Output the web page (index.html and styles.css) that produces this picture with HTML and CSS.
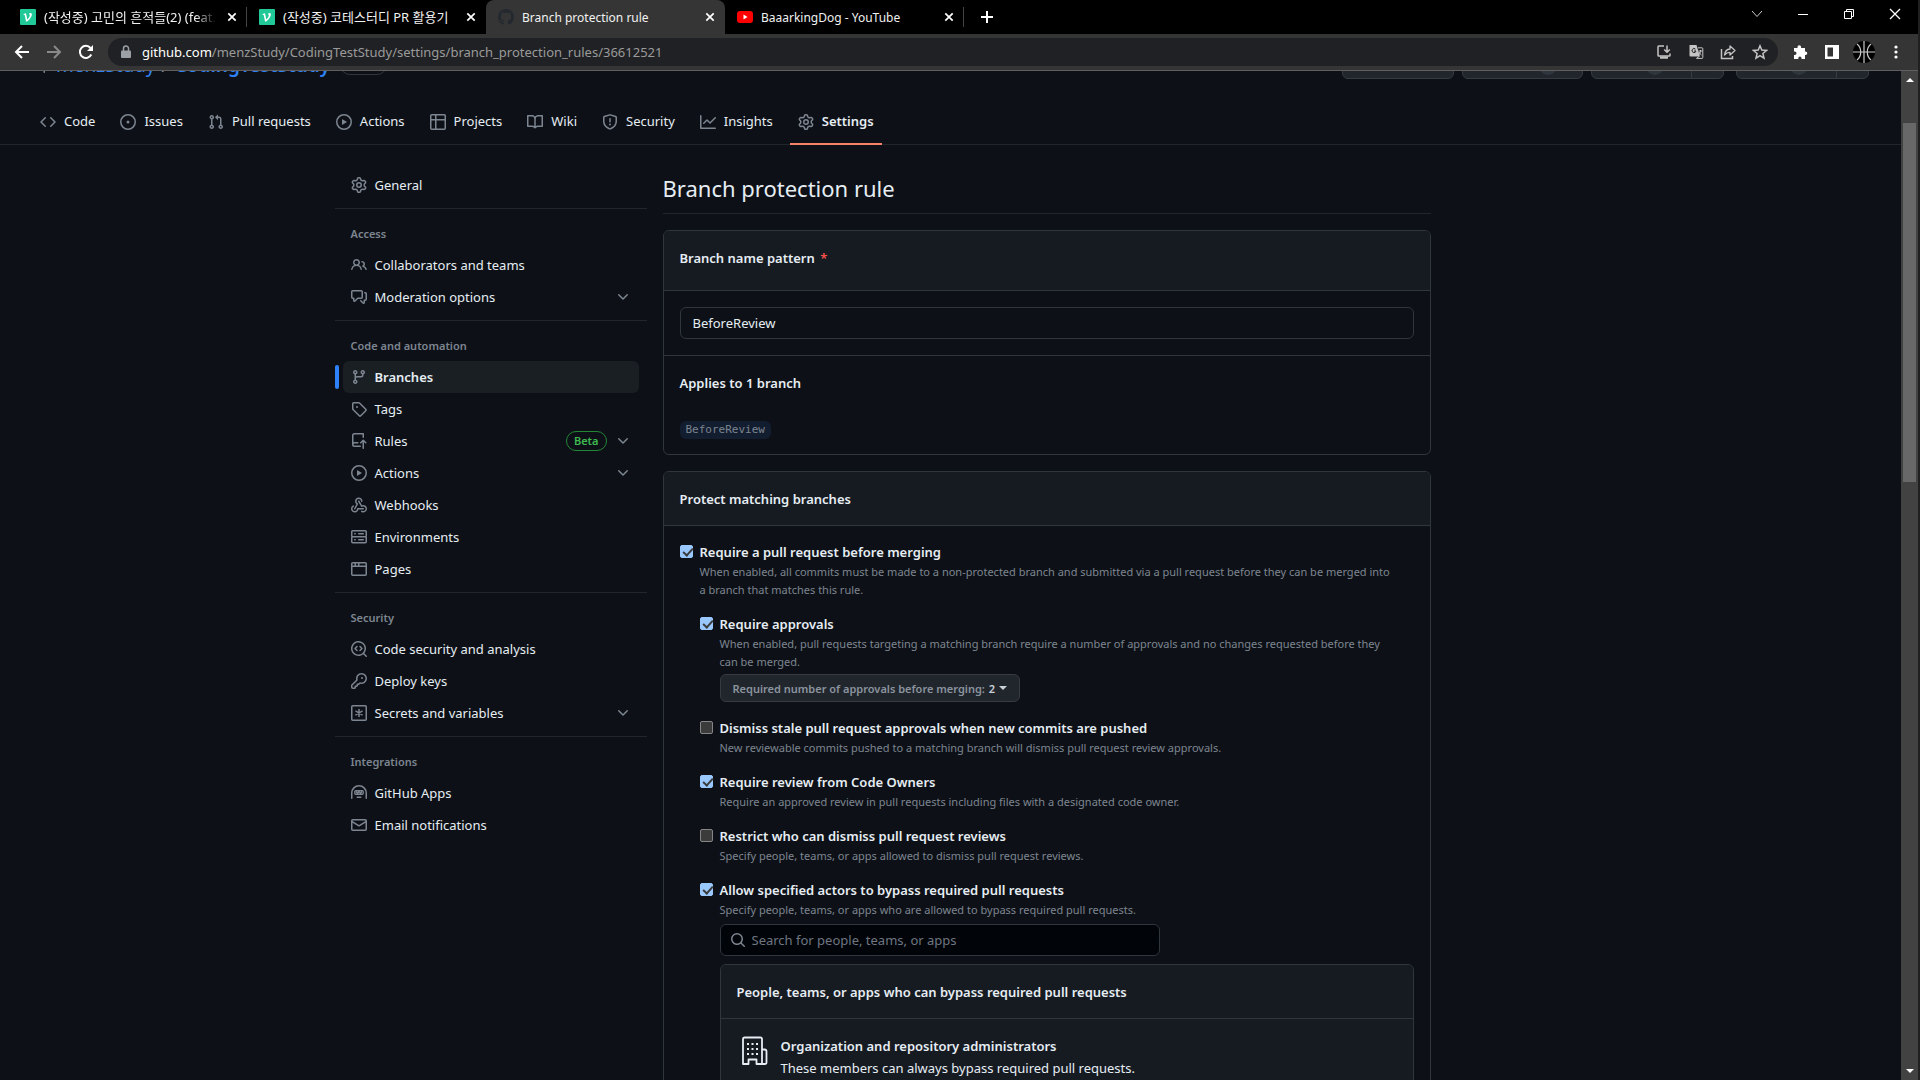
FILE: index.html
```html
<!DOCTYPE html>
<html lang="en">
<head>
<meta charset="utf-8">
<title>Branch protection rule</title>
<link rel="stylesheet" href="styles.css">
</head>
<body>
<svg class="sprite" aria-hidden="true">
  <symbol id="code" viewBox="0 0 16 16"><path d="M4.72 3.22a.75.75 0 0 1 1.06 1.06L2.06 8l3.72 3.72a.75.75 0 1 1-1.06 1.06L.47 8.53a.75.75 0 0 1 0-1.06l4.25-4.25Zm6.56 0a.75.75 0 1 0-1.06 1.06L13.94 8l-3.72 3.72a.75.75 0 1 0 1.06 1.06l4.25-4.25a.75.75 0 0 0 0-1.06l-4.25-4.25Z"/></symbol>
  <symbol id="issue" viewBox="0 0 16 16"><path d="M8 9.5a1.5 1.5 0 1 0 0-3 1.5 1.5 0 0 0 0 3Z"/><path d="M8 0a8 8 0 1 1 0 16A8 8 0 0 1 8 0ZM1.5 8a6.5 6.5 0 1 0 13 0 6.5 6.5 0 0 0-13 0Z"/></symbol>
  <symbol id="pull" viewBox="0 0 16 16"><path d="M1.5 3.25a2.25 2.25 0 1 1 3 2.122v5.256a2.251 2.251 0 1 1-1.5 0V5.372A2.25 2.25 0 0 1 1.5 3.25Zm5.677-.177L9.573.677A.25.25 0 0 1 10 .854V2.5h1A2.5 2.5 0 0 1 13.5 5v5.628a2.251 2.251 0 1 1-1.5 0V5a1 1 0 0 0-1-1h-1v1.646a.25.25 0 0 1-.427.177L7.177 3.427a.25.25 0 0 1 0-.354ZM3.75 2.5a.75.75 0 1 0 0 1.5.75.75 0 0 0 0-1.5Zm0 9.5a.75.75 0 1 0 0 1.5.75.75 0 0 0 0-1.5Zm8.25.75a.75.75 0 1 0 1.5 0 .75.75 0 0 0-1.5 0Z"/></symbol>
  <symbol id="play" viewBox="0 0 16 16"><path d="M8 0a8 8 0 1 1 0 16A8 8 0 0 1 8 0ZM1.5 8a6.5 6.5 0 1 0 13 0 6.5 6.5 0 0 0-13 0Zm4.879-2.773 4.264 2.559a.25.25 0 0 1 0 .428l-4.264 2.559A.25.25 0 0 1 6 10.559V5.442a.25.25 0 0 1 .379-.215Z"/></symbol>
  <symbol id="table" viewBox="0 0 16 16"><path d="M0 1.75C0 .784.784 0 1.75 0h12.5C15.216 0 16 .784 16 1.75v12.5A1.75 1.75 0 0 1 14.25 16H1.75A1.75 1.75 0 0 1 0 14.25ZM6.5 6.5v8h7.75a.25.25 0 0 0 .25-.25V6.5Zm8-1.5V1.75a.25.25 0 0 0-.25-.25H6.5V5Zm-13 1.5v7.75c0 .138.112.25.25.25H5v-8ZM5 5V1.5H1.75a.25.25 0 0 0-.25.25V5Z"/></symbol>
  <symbol id="book" viewBox="0 0 16 16"><path d="M0 1.75A.75.75 0 0 1 .75 1h4.253c1.227 0 2.317.59 3 1.501A3.743 3.743 0 0 1 11.006 1h4.245a.75.75 0 0 1 .75.75v10.5a.75.75 0 0 1-.75.75h-4.507a2.25 2.25 0 0 0-1.591.659l-.622.621a.75.75 0 0 1-1.06 0l-.622-.621A2.25 2.25 0 0 0 5.258 13H.75a.75.75 0 0 1-.75-.75Zm7.251 10.324.004-5.073-.002-2.253A2.25 2.25 0 0 0 5.003 2.5H1.5v9h3.757a3.75 3.75 0 0 1 1.994.574ZM8.755 4.75l-.004 7.322a3.752 3.752 0 0 1 1.992-.572H14.5v-9h-3.495a2.25 2.25 0 0 0-2.25 2.25Z"/></symbol>
  <symbol id="shield" viewBox="0 0 16 16"><path d="M7.467.133a1.748 1.748 0 0 1 1.066 0l5.25 1.68A1.75 1.75 0 0 1 15 3.48V7c0 1.566-.32 3.182-1.303 4.682-.983 1.498-2.585 2.813-5.032 3.855a1.697 1.697 0 0 1-1.33 0c-2.447-1.042-4.049-2.357-5.032-3.855C1.32 10.182 1 8.566 1 7V3.48a1.75 1.75 0 0 1 1.217-1.667Zm.61 1.429a.25.25 0 0 0-.153 0l-5.25 1.68a.25.25 0 0 0-.174.238V7c0 1.358.275 2.666 1.057 3.86.784 1.194 2.121 2.34 4.366 3.297a.196.196 0 0 0 .154 0c2.245-.956 3.582-2.104 4.366-3.298C13.225 9.666 13.5 8.36 13.5 7V3.48a.251.251 0 0 0-.174-.237l-5.25-1.68ZM8.75 4.75v3a.75.75 0 0 1-1.5 0v-3a.75.75 0 0 1 1.5 0ZM9 10.5a1 1 0 1 1-2 0 1 1 0 0 1 2 0Z"/></symbol>
  <symbol id="graph" viewBox="0 0 16 16"><path d="M1.5 1.75V13.5h13.75a.75.75 0 0 1 0 1.5H.75a.75.75 0 0 1-.75-.75V1.75a.75.75 0 0 1 1.5 0Zm14.28 2.53-5.25 5.25a.75.75 0 0 1-1.06 0L7 7.06 4.28 9.78a.75.75 0 0 1-1.06-1.06l3.25-3.25a.75.75 0 0 1 1.06 0L10 7.94l4.72-4.72a.75.75 0 1 1 1.06 1.06Z"/></symbol>
  <symbol id="gear" viewBox="0 0 16 16"><path d="M8 0a8.2 8.2 0 0 1 .701.031C9.444.095 9.99.645 10.16 1.29l.288 1.107c.018.066.079.158.212.224.231.114.454.243.668.386.123.082.233.09.299.071l1.103-.303c.644-.176 1.392.021 1.82.63.27.385.506.792.704 1.218.315.675.111 1.422-.364 1.891l-.814.806c-.049.048-.098.147-.088.294.016.257.016.515 0 .772-.01.147.038.246.088.294l.814.806c.475.469.679 1.216.364 1.891a7.977 7.977 0 0 1-.704 1.217c-.428.61-1.176.807-1.82.63l-1.102-.302c-.067-.019-.177-.011-.3.071a5.909 5.909 0 0 1-.668.386c-.133.066-.194.158-.211.224l-.29 1.106c-.168.646-.715 1.196-1.458 1.26a8.006 8.006 0 0 1-1.402 0c-.743-.064-1.289-.614-1.458-1.26l-.289-1.106c-.018-.066-.079-.158-.212-.224a5.738 5.738 0 0 1-.668-.386c-.123-.082-.233-.09-.299-.071l-1.103.303c-.644.176-1.392-.021-1.82-.63a8.12 8.12 0 0 1-.704-1.218c-.315-.675-.111-1.422.363-1.891l.815-.806c.05-.048.098-.147.088-.294a6.214 6.214 0 0 1 0-.772c.01-.147-.038-.246-.088-.294l-.815-.806C.635 6.045.431 5.298.746 4.623a7.92 7.92 0 0 1 .704-1.217c.428-.61 1.176-.807 1.82-.63l1.102.302c.067.019.177.011.3-.071.214-.143.437-.272.668-.386.133-.066.194-.158.211-.224l.29-1.106C6.009.645 6.556.095 7.299.03 7.53.01 7.764 0 8 0Zm-.571 1.525c-.036.003-.108.036-.137.146l-.289 1.105c-.147.561-.549.967-.998 1.189-.173.086-.34.183-.5.29-.417.278-.97.423-1.529.27l-1.103-.303c-.109-.03-.175.016-.195.045-.22.312-.412.644-.573.99-.014.031-.021.11.059.19l.815.806c.411.406.562.957.53 1.456a4.709 4.709 0 0 0 0 .582c.032.499-.119 1.05-.53 1.456l-.815.806c-.081.08-.073.159-.059.19.162.346.353.677.573.989.02.03.085.076.195.046l1.102-.303c.56-.153 1.113-.008 1.53.27.161.107.328.204.501.29.447.222.85.629.997 1.189l.289 1.105c.029.109.101.143.137.146a6.6 6.6 0 0 0 1.142 0c.036-.003.108-.036.137-.146l.289-1.105c.147-.561.549-.967.998-1.189.173-.086.34-.183.5-.29.417-.278.97-.423 1.529-.27l1.103.303c.109.029.175-.016.195-.045.22-.313.411-.644.573-.99.014-.031.021-.11-.059-.19l-.815-.806c-.411-.406-.562-.957-.53-1.456a4.709 4.709 0 0 0 0-.582c-.032-.499.119-1.05.53-1.456l.815-.806c.081-.08.073-.159.059-.19a6.464 6.464 0 0 0-.573-.989c-.02-.03-.085-.076-.195-.046l-1.102.303c-.56.153-1.113.008-1.53-.27a4.44 4.44 0 0 0-.501-.29c-.447-.222-.85-.629-.997-1.189l-.289-1.105c-.029-.11-.101-.143-.137-.146a6.6 6.6 0 0 0-1.142 0ZM11 8a3 3 0 1 1-6 0 3 3 0 0 1 6 0ZM9.5 8a1.5 1.5 0 1 0-3.001.001A1.5 1.5 0 0 0 9.5 8Z"/></symbol>
  <symbol id="people" viewBox="0 0 16 16"><path d="M2 5.5a3.5 3.5 0 1 1 5.898 2.549 5.508 5.508 0 0 1 3.034 4.084.75.75 0 1 1-1.482.235 4 4 0 0 0-7.9 0 .75.75 0 0 1-1.482-.236A5.507 5.507 0 0 1 3.102 8.05 3.493 3.493 0 0 1 2 5.5ZM11 4a3.001 3.001 0 0 1 2.22 5.018 5.01 5.01 0 0 1 2.56 3.012.749.749 0 0 1-.885.954.752.752 0 0 1-.549-.514 3.507 3.507 0 0 0-2.522-2.372.75.75 0 0 1-.574-.73v-.352a.75.75 0 0 1 .416-.672A1.5 1.5 0 0 0 11 5.5.75.75 0 0 1 11 4Zm-5.5-.5a2 2 0 1 0-.001 3.999A2 2 0 0 0 5.5 3.5Z"/></symbol>
  <symbol id="discussion" viewBox="0 0 16 16"><path d="M1.75 1h8.5c.966 0 1.75.784 1.75 1.75v5.5A1.75 1.75 0 0 1 10.25 10H7.061l-2.574 2.573A1.458 1.458 0 0 1 2 11.543V10h-.25A1.75 1.75 0 0 1 0 8.25v-5.5C0 1.784.784 1 1.75 1ZM1.5 2.75v5.5c0 .138.112.25.25.25h1a.75.75 0 0 1 .75.75v2.19l2.72-2.72a.749.749 0 0 1 .53-.22h3.5a.25.25 0 0 0 .25-.25v-5.5a.25.25 0 0 0-.25-.25h-8.5a.25.25 0 0 0-.25.25Zm13 2a.25.25 0 0 0-.25-.25h-.5a.75.75 0 0 1 0-1.5h.5c.966 0 1.75.784 1.75 1.75v5.5A1.75 1.75 0 0 1 14.25 12H14v1.543a1.458 1.458 0 0 1-2.487 1.03L9.22 12.28a.749.749 0 0 1 .326-1.275.749.749 0 0 1 .734.215l2.22 2.22v-2.19a.75.75 0 0 1 .75-.75h1a.25.25 0 0 0 .25-.25Z"/></symbol>
  <symbol id="branch" viewBox="0 0 16 16"><path d="M9.5 3.25a2.25 2.25 0 1 1 3 2.122V6A2.5 2.5 0 0 1 10 8.5H6a1 1 0 0 0-1 1v1.128a2.251 2.251 0 1 1-1.5 0V5.372a2.25 2.25 0 1 1 1.5 0v1.836A2.493 2.493 0 0 1 6 7h4a1 1 0 0 0 1-1v-.628A2.25 2.25 0 0 1 9.5 3.25Zm-6 0a.75.75 0 1 0 1.5 0 .75.75 0 0 0-1.5 0Zm8.25-.75a.75.75 0 1 0 0 1.5.75.75 0 0 0 0-1.5ZM4.25 12a.75.75 0 1 0 0 1.5.75.75 0 0 0 0-1.5Z"/></symbol>
  <symbol id="tag" viewBox="0 0 16 16"><path d="M1 7.775V2.75C1 1.784 1.784 1 2.75 1h5.025c.464 0 .91.184 1.238.513l6.25 6.25a1.75 1.75 0 0 1 0 2.474l-5.026 5.026a1.75 1.75 0 0 1-2.474 0l-6.25-6.25A1.752 1.752 0 0 1 1 7.775Zm1.5 0c0 .066.026.13.073.177l6.25 6.25a.25.25 0 0 0 .354 0l5.025-5.025a.25.25 0 0 0 0-.354l-6.25-6.25a.25.25 0 0 0-.177-.073H2.75a.25.25 0 0 0-.25.25ZM6 5a1 1 0 1 1 0 2 1 1 0 0 1 0-2Z"/></symbol>
  <symbol id="push" viewBox="0 0 16 16"><path d="M1 2.5A2.5 2.5 0 0 1 3.5 0h8.75a.75.75 0 0 1 .75.75v3.5a.75.75 0 0 1-1.5 0V1.5h-8a1 1 0 0 0-1 1v6.708A2.493 2.493 0 0 1 3.5 9h3.25a.75.75 0 0 1 0 1.5H3.5a1 1 0 0 0 0 2h5.75a.75.75 0 0 1 0 1.5H3.5A2.5 2.5 0 0 1 1 11.5ZM14.22 10.27l-1.23-1.22v6.225a.75.75 0 0 1-1.5 0V9.05l-1.22 1.22a.75.75 0 1 1-1.06-1.06l2.505-2.504a.75.75 0 0 1 1.06 0L15.28 9.21a.75.75 0 0 1-1.06 1.06Z"/></symbol>
  <symbol id="webhook" viewBox="0 0 16 16"><path d="M5.5 4.25a2.25 2.25 0 0 1 4.5 0 .75.75 0 0 0 1.5 0 3.75 3.75 0 1 0-6.14 2.889l-2.272 4.258a.75.75 0 0 0 1.324.706L7 7.25a.75.75 0 0 0-.309-1.015A2.25 2.25 0 0 1 5.5 4.25Z"/><path d="M7.364 3.607a.75.75 0 0 1 1.03.257l2.608 4.349a3.75 3.75 0 1 1-.628 6.785.75.75 0 0 1 .752-1.299 2.25 2.25 0 1 0-.033-3.88.75.75 0 0 1-1.03-.256L7.107 4.636a.75.75 0 0 1 .257-1.03Z"/><path d="M2.9 8.776A.75.75 0 0 1 2.625 9.8 2.25 2.25 0 1 0 6 11.75a.75.75 0 0 1 .75-.751h5.5a.75.75 0 0 1 0 1.5H7.425a3.751 3.751 0 1 1-5.55-3.998.75.75 0 0 1 1.024.274Z"/></symbol>
  <symbol id="server" viewBox="0 0 16 16"><path d="M1.75 1h12.5c.966 0 1.75.784 1.75 1.75v4c0 .372-.116.717-.314 1 .198.283.314.628.314 1v4a1.75 1.75 0 0 1-1.75 1.75H1.75A1.75 1.75 0 0 1 0 12.75v-4c0-.358.109-.707.314-1a1.739 1.739 0 0 1-.314-1v-4C0 1.784.784 1 1.75 1ZM1.5 2.75v4c0 .138.112.25.25.25h12.5a.25.25 0 0 0 .25-.25v-4a.25.25 0 0 0-.25-.25H1.75a.25.25 0 0 0-.25.25Zm.25 5.75a.25.25 0 0 0-.25.25v4c0 .138.112.25.25.25h12.5a.25.25 0 0 0 .25-.25v-4a.25.25 0 0 0-.25-.25ZM7 4.75A.75.75 0 0 1 7.75 4h4.5a.75.75 0 0 1 0 1.5h-4.5A.75.75 0 0 1 7 4.75ZM7.75 10h4.5a.75.75 0 0 1 0 1.5h-4.5a.75.75 0 0 1 0-1.5ZM3 4.75A.75.75 0 0 1 3.75 4h.5a.75.75 0 0 1 0 1.5h-.5A.75.75 0 0 1 3 4.75ZM3.75 10h.5a.75.75 0 0 1 0 1.5h-.5a.75.75 0 0 1 0-1.5Z"/></symbol>
  <symbol id="browser" viewBox="0 0 16 16"><path d="M0 2.75C0 1.784.784 1 1.75 1h12.5c.966 0 1.75.784 1.75 1.75v10.5A1.75 1.75 0 0 1 14.25 15H1.75A1.75 1.75 0 0 1 0 13.25ZM14.5 6h-13v7.25c0 .138.112.25.25.25h12.5a.25.25 0 0 0 .25-.25Zm-6-3.5v2h6V2.75a.25.25 0 0 0-.25-.25ZM5 2.5v2h2v-2Zm-3.25 0a.25.25 0 0 0-.25.25V4.5h2v-2Z"/></symbol>
  <symbol id="codescan" viewBox="0 0 16 16"><path d="M8.47 4.97a.75.75 0 0 0 0 1.06L9.94 7.5 8.47 8.97a.75.75 0 1 0 1.06 1.06l2-2a.75.75 0 0 0 0-1.06l-2-2a.75.75 0 0 0-1.06 0ZM6.53 6.03a.75.75 0 0 0-1.06-1.06l-2 2a.75.75 0 0 0 0 1.06l2 2a.75.75 0 1 0 1.06-1.06L5.06 7.5l1.47-1.47Z"/><path d="M12.246 13.307a7.501 7.501 0 1 1 1.06-1.06l2.474 2.473a.75.75 0 1 1-1.06 1.06l-2.474-2.473ZM1.5 7.5a6.002 6.002 0 0 0 3.608 5.504 6.002 6.002 0 0 0 6.486-1.117.748.748 0 0 1 .292-.293A6 6 0 1 0 1.5 7.5Z"/></symbol>
  <symbol id="key" viewBox="0 0 16 16"><path d="M10.5 0a5.499 5.499 0 1 1-1.288 10.848l-.932.932a.749.749 0 0 1-.53.22H7v.75a.749.749 0 0 1-.22.53l-.5.5a.749.749 0 0 1-.53.22H5v.75a.749.749 0 0 1-.22.53l-.5.5a.749.749 0 0 1-.53.22h-2A1.75 1.75 0 0 1 0 14.25v-2c0-.199.079-.389.22-.53l4.932-4.932A5.5 5.5 0 0 1 10.5 0Zm-4 5.5c-.001.431.069.86.205 1.269a.75.75 0 0 1-.181.768L1.5 12.56v1.69c0 .138.112.25.25.25h1.69l.06-.06v-1.19a.75.75 0 0 1 .75-.75h1.19l.06-.06v-1.19a.75.75 0 0 1 .75-.75h1.19l1.023-1.025a.75.75 0 0 1 .768-.18A4 4 0 1 0 6.5 5.5ZM11 6a1 1 0 1 1 0-2 1 1 0 0 1 0 2Z"/></symbol>
  <symbol id="asterisk" viewBox="0 0 16 16"><rect x=".75" y=".75" width="14.5" height="14.5" rx="1" fill="none" stroke="currentColor" stroke-width="1.5"/><path d="M8 4.4v7.2M4.9 6.2l6.2 3.6M11.1 6.2l-6.2 3.6" fill="none" stroke="currentColor" stroke-width="1.5" stroke-linecap="round"/></symbol>
  <symbol id="hubot" viewBox="0 0 16 16"><path d="M0 8a8 8 0 1 1 16 0v5.25a.75.75 0 0 1-1.5 0V8a6.5 6.5 0 1 0-13 0v5.25a.75.75 0 0 1-1.5 0V8Zm5.5 4.25a.75.75 0 0 1 .75-.75h3.5a.75.75 0 0 1 0 1.5h-3.5a.75.75 0 0 1-.75-.75Z"/><path d="M4.75 5.75h6.5a1 1 0 0 1 1 1v1.5a1 1 0 0 1-1 1h-6.5a1 1 0 0 1-1-1v-1.5a1 1 0 0 1 1-1ZM5 6.800l1.500 1.300L8 6.800l1.500 1.300L11 6.800" fill="none" stroke="currentColor" stroke-width="1.3"/></symbol>
  <symbol id="mail" viewBox="0 0 16 16"><path d="M1.75 2h12.5c.966 0 1.75.784 1.75 1.75v8.5A1.75 1.75 0 0 1 14.25 14H1.75A1.75 1.75 0 0 1 0 12.25v-8.5C0 2.784.784 2 1.75 2ZM1.5 12.251c0 .138.112.25.25.25h12.5a.25.25 0 0 0 .25-.25V5.809L8.38 9.397a.75.75 0 0 1-.76 0L1.5 5.809v6.442Zm13-8.181v-.32a.25.25 0 0 0-.25-.25H1.75a.25.25 0 0 0-.25.25v.32L8 7.88Z"/></symbol>
  <symbol id="chevron" viewBox="0 0 16 16"><path d="M12.78 5.22a.749.749 0 0 1 0 1.06l-4.25 4.25a.749.749 0 0 1-1.06 0L3.22 6.28a.749.749 0 1 1 1.06-1.06L8 8.939l3.72-3.719a.749.749 0 0 1 1.06 0Z"/></symbol>
  <symbol id="github" viewBox="0 0 16 16"><path d="M8 0c4.42 0 8 3.58 8 8a8.013 8.013 0 0 1-5.45 7.59c-.4.08-.55-.17-.55-.38 0-.27.01-1.13.01-2.2 0-.75-.25-1.23-.54-1.48 1.78-.2 3.65-.88 3.65-3.95 0-.88-.31-1.59-.82-2.15.08-.2.36-1.02-.08-2.12 0 0-.67-.22-2.2.82-.64-.18-1.32-.27-2-.27-.68 0-1.36.09-2 .27-1.53-1.03-2.2-.82-2.2-.82-.44 1.1-.16 1.92-.08 2.12-.51.56-.82 1.28-.82 2.15 0 3.06 1.86 3.75 3.64 3.95-.23.2-.44.55-.51 1.07-.46.21-1.61.55-2.33-.66-.15-.24-.6-.83-1.23-.82-.67.01-.27.38.01.53.34.19.73.9.82 1.13.16.45.68 1.31 2.69.94 0 .67.01 1.3.01 1.49 0 .21-.15.45-.55.38A7.995 7.995 0 0 1 0 8c0-4.42 3.58-8 8-8Z"/></symbol>
  <symbol id="search" viewBox="0 0 16 16"><path d="M10.68 11.74a6 6 0 0 1-7.922-8.982 6 6 0 0 1 8.982 7.922l3.04 3.04a.749.749 0 0 1-.326 1.275.749.749 0 0 1-.734-.215ZM11.5 7a4.499 4.499 0 1 0-8.997 0A4.499 4.499 0 0 0 11.5 7Z"/></symbol>
  <symbol id="org" viewBox="0 0 32 32"><path d="M6 29V4a1.500 1.500 0 0 1 1.500-1.500h16A1.500 1.500 0 0 1 25 4v25h-5.500v-4.500h-8V29zM25 14.500h2.500a2 2 0 0 1 2 2V27.500a1.500 1.500 0 0 1-1.500 1.500h-3" fill="none" stroke="currentColor" stroke-width="1.800" stroke-linejoin="round"/><path d="M10 8h2v2h-2zm4.500 0h2v2h-2zm4.500 0h2v2h-2zm-9 5h2v2h-2zm4.500 0h2v2h-2zm4.500 0h2v2h-2zm-9 5h2v2h-2zm4.500 0h2v2h-2zm4.500 0h2v2h-2z"/></symbol>
  <symbol id="velog" viewBox="0 0 16 16"><rect width="16" height="16" rx="1" fill="#20c997"/><path d="M3.600 4.900 6 4.300l1.300 6.200c1.700-1.700 2.500-3.200 2.500-4.300 0-.6-.4-.9-.9-1.300.4-.5 1-.8 1.600-.8.8 0 1.400.6 1.400 1.500 0 2-1.700 4.500-4.800 7H6L4.700 5.900l-1.200-.2z" fill="#fff"/></symbol>
  <symbol id="close" viewBox="0 0 16 16"><path d="m4.300 4.300 7.400 7.400m0-7.400-7.400 7.400" fill="none" stroke="currentColor" stroke-width="1.700"/></symbol>
</svg>

<div class="window">
  <header class="browser">
    <div class="tabstrip">
      <div class="tab tab-first"><svg class="icon"><use href="#velog"/></svg><span class="tab-title" lang="ko">(작성중) 고민의 흔적들(2) (feat. J</span><button class="bare" aria-label="Close tab"><svg class="icon"><use href="#close"/></svg></button></div>
      <div class="tab"><svg class="icon"><use href="#velog"/></svg><span class="tab-title" lang="ko">(작성중) 코테스터디 PR 활용기</span><button class="bare" aria-label="Close tab"><svg class="icon"><use href="#close"/></svg></button></div>
      <div class="tab tab-active"><svg class="icon favicon-github"><use href="#github"/></svg><span class="tab-title">Branch protection rule</span><button class="bare" aria-label="Close tab"><svg class="icon"><use href="#close"/></svg></button></div>
      <div class="tab tab-last"><svg class="icon" viewBox="0 0 16 16"><rect y="2" width="16" height="12" rx="3" fill="#f00"/><path d="m6.500 5.500 4 2.500-4 2.500z" fill="#fff"/></svg><span class="tab-title">BaaarkingDog - YouTube</span><button class="bare" aria-label="Close tab"><svg class="icon"><use href="#close"/></svg></button></div>
      <button class="bare new-tab" aria-label="New tab"><svg class="icon" viewBox="0 0 16 16"><path d="M8 2v12M2 8h12" fill="none" stroke="currentColor" stroke-width="2"/></svg></button>
      <div class="window-controls">
        <button class="bare" aria-label="Search tabs"><svg class="icon" viewBox="0 0 16 16"><path d="m3 5 5 5.500L13 5" fill="none" stroke="#ccc"/></svg></button>
        <button class="bare" aria-label="Minimize"><svg class="icon" viewBox="0 0 16 16"><path d="M3 8.500h10" fill="none" stroke="currentColor"/></svg></button>
        <button class="bare" aria-label="Restore"><svg class="icon" viewBox="0 0 16 16"><path d="M3.500 5.500h7v7h-7zM5.500 5.500v-2h7v7h-2" fill="none" stroke="currentColor"/></svg></button>
        <button class="bare" aria-label="Close"><svg class="icon" viewBox="0 0 16 16"><path d="m3 3 10 10M13 3 3 13" fill="none" stroke="currentColor" stroke-width="1.300"/></svg></button>
      </div>
    </div>
    <div class="toolbar">
      <div class="nav-buttons">
        <button class="bare" aria-label="Back"><svg class="icon" viewBox="0 0 16 16"><path d="M15 8H2m6-6L2 8l6 6" fill="none" stroke="currentColor" stroke-width="2"/></svg></button>
        <button class="bare forward" aria-label="Forward"><svg class="icon" viewBox="0 0 16 16"><path d="M1 8h13M8 2l6 6-6 6" fill="none" stroke="currentColor" stroke-width="2"/></svg></button>
        <button class="bare" aria-label="Reload"><svg class="icon" viewBox="0 0 16 16"><path d="M13.300 10.500A6 6 0 1 1 12.500 4" fill="none" stroke="currentColor" stroke-width="2"/><path d="M15 1v6H9z"/></svg></button>
      </div>
      <div class="omnibox">
        <svg class="icon lock" viewBox="0 0 16 16"><path d="M4 6.500h8a1 1 0 0 1 1 1v5.500a1 1 0 0 1-1 1H4a1 1 0 0 1-1-1V7.500a1 1 0 0 1 1-1z"/><path d="M5.500 7V4.500a2.500 2.500 0 0 1 5 0V7" fill="none" stroke="currentColor" stroke-width="1.500"/></svg>
        <span class="url"><b>github.com</b>/menzStudy/CodingTestStudy/settings/branch_protection_rules/36612521</span>
        <div class="omni-actions">
          <button class="bare" aria-label="Install"><svg class="icon" viewBox="0 0 16 16"><path d="M8 2H2.800Q2 2 2 2.800v8.400q0 .8.800.8h10.400q.8 0 .8-.8V9.500M11 1.500V8M8.200 5.500 11 8.300l2.800-2.800" fill="none" stroke="currentColor" stroke-width="1.500"/><path d="M4 12.500h8v2.200H4z"/></svg></button>
          <button class="bare" aria-label="Translate"><svg class="icon" viewBox="0 0 16 16"><path d="M1.500 1h7l3.500 11.500H2.500a1 1 0 0 1-1-1z"/><path d="M10 3.800h4a.8.8 0 0 1 .8.800v9a.8.8 0 0 1-.8.800H8.500l2.800-2M10.500 7h4M12.500 6v1c0 1.500-1 3-2 4m.5-3c.6 1.400 1.500 2.400 2.500 3" fill="none" stroke="currentColor"/><path d="M7.500 5.200A2 2 0 1 0 8 7H6" fill="none" stroke="#202124"/></svg></button>
          <button class="bare" aria-label="Share"><svg class="icon" viewBox="0 0 16 16"><path d="M1.500 5v9.500h11V12" fill="none" stroke="currentColor" stroke-width="1.500"/><path d="M4.500 11c.5-4 2.500-5.800 5.500-6V2l5 4.500-5 4.500V8.300c-2.500 0-4.200.9-5.500 2.700z" fill="none" stroke="currentColor" stroke-width="1.300" stroke-linejoin="round"/></svg></button>
          <button class="bare" aria-label="Bookmark"><svg class="icon" viewBox="0 0 16 16"><path d="m8 1.800 1.800 4.300 4.700.4-3.600 3 1.100 4.600L8 11.700l-4 2.400 1.100-4.600-3.600-3 4.700-.4z" fill="none" stroke="currentColor" stroke-width="1.500"/></svg></button>
        </div>
      </div>
      <div class="extensions">
        <button class="bare" aria-label="Extensions"><svg class="icon" viewBox="0 0 16 16"><path d="M2 4h3.500V3a1.800 1.800 0 0 1 3.600 0v1H13v3.500h.5a1.800 1.800 0 0 1 0 3.600H13V15H9.500v-1a1.600 1.600 0 0 0-3.200 0v1H2v-4h.8a1.700 1.700 0 0 0 0-3.400H2z"/></svg></button>
        <button class="bare" aria-label="Side panel"><svg class="icon" viewBox="0 0 16 16"><path fill-rule="evenodd" d="M1 1h14v14H1zm2.500 2.500v9H9v-9z"/></svg></button>
        <button class="bare" aria-label="Profile"><svg class="avatar" viewBox="0 0 22 22"><circle cx="11" cy="11" r="11" fill="#000"/><path d="M11 0v22M0 11h22M4 3c5 4 5 12 0 16M18 3c-5 4-5 12 0 16" fill="none" stroke="#ccc" stroke-width="1.200"/></svg></button>
        <button class="bare" aria-label="Menu"><svg class="icon" viewBox="0 0 16 16"><circle cx="8" cy="3" r="1.600"/><circle cx="8" cy="8" r="1.600"/><circle cx="8" cy="13" r="1.600"/></svg></button>
      </div>
    </div>
  </header>

  <div class="viewport">
    <div class="page">
      <div class="repo-head">
        <div class="repo-title"><svg class="icon"><use href="#push"/></svg><a href="#">menzStudy</a><span class="slash">/</span><a class="repo-name" href="#">CodingTestStudy</a><span class="pill">Public</span></div>
        <div class="repo-actions">
          <button class="btn btn-pin">Edit Pins</button>
          <button class="btn btn-watch">Unwatch <span class="count">1</span></button>
          <div class="btn-group"><button class="btn">Fork <span class="count">0</span></button><button class="btn" aria-label="More forks"></button></div>
          <div class="btn-group btn-star"><button class="btn">Star <span class="count">0</span></button><button class="btn" aria-label="Lists"></button></div>
        </div>
      </div>
      <nav class="repo-nav">
        <a href="#"><svg class="icon"><use href="#code"/></svg>Code</a>
        <a href="#"><svg class="icon"><use href="#issue"/></svg>Issues</a>
        <a href="#"><svg class="icon"><use href="#pull"/></svg>Pull requests</a>
        <a href="#"><svg class="icon"><use href="#play"/></svg>Actions</a>
        <a href="#"><svg class="icon"><use href="#table"/></svg>Projects</a>
        <a href="#"><svg class="icon"><use href="#book"/></svg>Wiki</a>
        <a href="#"><svg class="icon"><use href="#shield"/></svg>Security</a>
        <a href="#"><svg class="icon"><use href="#graph"/></svg>Insights</a>
        <a href="#" class="current"><svg class="icon"><use href="#gear"/></svg>Settings</a>
      </nav>

      <div class="layout">
        <nav class="sidebar">
          <section class="group">
            <a class="item" href="#"><svg class="icon"><use href="#gear"/></svg>General</a>
          </section>
          <section class="group">
            <h2>Access</h2>
            <a class="item" href="#"><svg class="icon"><use href="#people"/></svg>Collaborators and teams</a>
            <a class="item" href="#"><svg class="icon"><use href="#discussion"/></svg>Moderation options<svg class="icon expand"><use href="#chevron"/></svg></a>
          </section>
          <section class="group">
            <h2>Code and automation</h2>
            <a class="item selected" href="#"><svg class="icon"><use href="#branch"/></svg>Branches</a>
            <a class="item" href="#"><svg class="icon"><use href="#tag"/></svg>Tags</a>
            <a class="item" href="#"><svg class="icon"><use href="#push"/></svg>Rules<span class="beta">Beta</span><svg class="icon"><use href="#chevron"/></svg></a>
            <a class="item" href="#"><svg class="icon"><use href="#play"/></svg>Actions<svg class="icon expand"><use href="#chevron"/></svg></a>
            <a class="item" href="#"><svg class="icon"><use href="#webhook"/></svg>Webhooks</a>
            <a class="item" href="#"><svg class="icon"><use href="#server"/></svg>Environments</a>
            <a class="item" href="#"><svg class="icon"><use href="#browser"/></svg>Pages</a>
          </section>
          <section class="group">
            <h2>Security</h2>
            <a class="item" href="#"><svg class="icon"><use href="#codescan"/></svg>Code security and analysis</a>
            <a class="item" href="#"><svg class="icon"><use href="#key"/></svg>Deploy keys</a>
            <a class="item" href="#"><svg class="icon"><use href="#asterisk"/></svg>Secrets and variables<svg class="icon expand"><use href="#chevron"/></svg></a>
          </section>
          <section class="group">
            <h2>Integrations</h2>
            <a class="item" href="#"><svg class="icon"><use href="#hubot"/></svg>GitHub Apps</a>
            <a class="item" href="#"><svg class="icon"><use href="#mail"/></svg>Email notifications</a>
          </section>
        </nav>

        <main class="main">
          <h1>Branch protection rule</h1>
          <section class="box">
            <div class="box-header box-header-tall"><label for="pattern">Branch name pattern <span class="required">*</span></label></div>
            <div class="box-row"><input class="field" id="pattern" type="text" value="BeforeReview"></div>
            <div class="box-row applies">
              <h3>Applies to 1 branch</h3>
              <code>BeforeReview</code>
            </div>
          </section>

          <section class="box">
            <div class="box-header"><h3>Protect matching branches</h3></div>
            <div class="rules">
              <div class="rule">
                <input type="checkbox" id="r1" checked>
                <div class="rule-body">
                  <label for="r1">Require a pull request before merging</label>
                  <p>When enabled, all commits must be made to a non-protected branch and submitted via a pull request before they can be merged into a branch that matches this rule.</p>
                </div>
              </div>
              <div class="nested">
                <div class="rule">
                  <input type="checkbox" id="r2" checked>
                  <div class="rule-body">
                    <label for="r2">Require approvals</label>
                    <p>When enabled, pull requests targeting a matching branch require a number of approvals and no changes requested before they can be merged.</p>
                    <button class="btn approvals"><span>Required number of approvals before merging:</span> 2<i class="caret"></i></button>
                  </div>
                </div>
                <div class="rule">
                  <input type="checkbox" id="r3">
                  <div class="rule-body">
                    <label for="r3">Dismiss stale pull request approvals when new commits are pushed</label>
                    <p>New reviewable commits pushed to a matching branch will dismiss pull request review approvals.</p>
                  </div>
                </div>
                <div class="rule">
                  <input type="checkbox" id="r4" checked>
                  <div class="rule-body">
                    <label for="r4">Require review from Code Owners</label>
                    <p>Require an approved review in pull requests including files with a designated code owner.</p>
                  </div>
                </div>
                <div class="rule">
                  <input type="checkbox" id="r5">
                  <div class="rule-body">
                    <label for="r5">Restrict who can dismiss pull request reviews</label>
                    <p>Specify people, teams, or apps allowed to dismiss pull request reviews.</p>
                  </div>
                </div>
                <div class="rule">
                  <input type="checkbox" id="r6" checked>
                  <div class="rule-body">
                    <label for="r6">Allow specified actors to bypass required pull requests</label>
                    <p>Specify people, teams, or apps who are allowed to bypass required pull requests.</p>
                    <div class="search"><svg class="icon"><use href="#search"/></svg><input type="text" aria-label="Search for people, teams, or apps" placeholder="Search for people, teams, or apps"></div>
                    <section class="box actors">
                      <div class="box-header"><h3>People, teams, or apps who can bypass required pull requests</h3></div>
                      <div class="actor">
                        <svg class="org-icon"><use href="#org"/></svg>
                        <div><strong>Organization and repository administrators</strong><span>These members can always bypass required pull requests.</span></div>
                      </div>
                    </section>
                  </div>
                </div>
              </div>
            </div>
          </section>
        </main>
      </div>
    </div>
    <div class="scrollbar"><i class="arrow arrow-up"></i><div class="thumb"></div><i class="arrow arrow-down"></i></div>
  </div>
</div>
</body>
</html>
```

FILE: styles.css
```css
* { box-sizing: border-box; }

body {
  margin: 0;
  background: #202020;
  color: #e6edf3;
  font-family: "Noto Sans", "Open Sans", "Noto Sans CJK KR", sans-serif;
  font-size: 13px;
  line-height: 21px;
}

h1, h2, h3, p { margin: 0; }
a { color: inherit; text-decoration: none; }
button, input { font: inherit; color: inherit; }

.sprite { display: none; }
.icon { width: 16px; height: 16px; flex: none; fill: currentColor; display: block; }

.bare {
  display: flex;
  align-items: center;
  justify-content: center;
  padding: 0;
  border: 0;
  background: none;
  color: #fff;
}

.window {
  height: 100vh;
  margin-right: 2px;
  display: flex;
  flex-direction: column;
  overflow: hidden;
}

/* Browser frame */
.browser { flex: none; border-bottom: 1px solid #5f5f5f; }

.tabstrip {
  height: 34px;
  padding-left: 8px;
  display: flex;
  background: #000;
}

.tab {
  width: 239px;
  padding: 0 7px 0 12px;
  display: flex;
  align-items: center;
  gap: 8px;
  color: #f1f1f1;
  font-size: 12px;
  background: linear-gradient(#444, #444) right center / 1px 20px no-repeat;
}
.tab:nth-child(2) { background: none; }
.tab-active { background: #353535; border-radius: 8px 8px 0 0; }
.tab-title { flex: 1; overflow: hidden; white-space: nowrap; }
.tab-title:lang(ko) { font-size: 13px; }
.tab-first .tab-title { mask-image: linear-gradient(to right, #000 88%, transparent); }
.favicon-github { color: #24292f; }
.new-tab { width: 46px; }

.window-controls { margin-left: auto; display: flex; height: 28px; }
.window-controls .bare { width: 46px; }

.toolbar {
  height: 36px;
  padding: 4px 6px;
  display: flex;
  background: #353535;
}
.nav-buttons { display: flex; width: 102px; }
.nav-buttons .bare { width: 32px; }
.forward { color: #8a8a8a; }

.omnibox {
  flex: 1;
  padding: 0 10px;
  display: flex;
  align-items: center;
  gap: 8px;
  border-radius: 14px;
  background: #202124;
}
.lock { color: #9aa0a6; }
.url { flex: 1; color: #9a9a9a; font-size: 13px; white-space: nowrap; }
.url b { color: #fff; font-weight: 400; }
.omni-actions { display: flex; gap: 16px; }
.omni-actions .bare { color: #c4c4c4; }
.extensions { display: flex; padding-left: 6px; }
.extensions .bare { width: 32px; }
.avatar { width: 22px; height: 22px; }

/* Scrolled page */
.viewport { flex: 1; min-height: 0; display: flex; background: #0d1117; }
.page { flex: 1; min-width: 0; overflow: hidden; }

.scrollbar {
  width: 17px;
  padding: 7px 2px;
  display: flex;
  flex-direction: column;
  align-items: center;
  background: #424242;
}
.thumb { width: 13px; height: 359px; margin: 41px 0 auto; background: #686868; }
.arrow { border: 4px solid transparent; border-top: 0; border-bottom-color: #fff; }
.arrow-down { border-top: 4px solid #fff; border-bottom: 0; }

.repo-head {
  margin-top: -20px;
  padding: 0 32px;
  height: 51px;
  display: flex;
  justify-content: space-between;
  align-items: flex-start;
}
.repo-title {
  display: flex;
  align-items: center;
  gap: 6px;
  height: 28px;
  color: #7d8590;
  font-size: 19px;
}
.repo-title .icon { margin-right: 2px; }
.repo-title a { color: #2f81f7; }
.repo-title .repo-name { font-weight: 600; }
.pill { margin-left: 4px; padding: 0 7px; border: 1px solid #30363d; border-radius: 10px; font-size: 11px; line-height: 18px; }
.repo-actions { display: flex; gap: 8px; }

.btn {
  height: 28px;
  padding: 0 12px;
  border: 1px solid #363b42;
  border-radius: 6px;
  background: #21262d;
  color: #c9d1d9;
  font-size: 11px;
  font-weight: 600;
}
.btn-pin { width: 112px; }
.btn-watch { width: 121px; }
.btn-star { margin-left: 4px; }
.btn-group { display: flex; }
.btn-group .btn:first-child { width: 101px; border-radius: 6px 0 0 6px; }
.btn-group .btn:last-child { width: 33px; margin-left: -1px; border-radius: 0 6px 6px 0; }
.count { display: inline-block; min-width: 18px; border-radius: 9px; background: #30363d; line-height: 18px; }

.repo-nav {
  height: 43px;
  padding: 0 32px;
  display: flex;
  gap: 9px;
  border-bottom: 1px solid #21262d;
}
.repo-nav a {
  height: 43px;
  padding: 0 8px 4px;
  display: flex;
  align-items: center;
  gap: 8px;
}
.repo-nav .icon { color: #7d8590; }
.repo-nav .current { border-bottom: 2px solid #f78166; padding-bottom: 2px; font-weight: 600; }

.layout {
  max-width: 1280px;
  margin: 0 auto;
  padding: 24px;
  display: grid;
  grid-template-columns: 312px minmax(0, 768px);
  gap: 16px;
}

/* Settings menu */
.group { padding-bottom: 7px; }
.group + .group { border-top: 1px solid #21262d; }
.group h2 {
  padding: 16px 16px 6px;
  color: #7d8590;
  font-size: 11px;
  line-height: 18px;
  font-weight: 600;
}
.item {
  position: relative;
  height: 32px;
  margin: 0 8px;
  padding: 0 8px;
  display: flex;
  align-items: center;
  gap: 8px;
  border-radius: 6px;
}
.item .icon { color: #7d8590; }
.item .expand { margin-left: auto; }
.selected { background: #1a1f24; font-weight: 600; }
.selected::before {
  content: "";
  position: absolute;
  left: -8px;
  top: 4px;
  width: 4px;
  height: 24px;
  border-radius: 6px;
  background: #2f81f7;
}
.beta {
  margin-left: auto;
  padding: 0 7px;
  border: 1px solid #238636;
  border-radius: 10px;
  color: #3fb950;
  font-size: 11px;
  line-height: 18px;
  font-weight: 600;
}

/* Rule form */
.main h1 {
  height: 45px;
  margin-bottom: 16px;
  border-bottom: 1px solid #21262d;
  font-size: 22px;
  line-height: 38px;
  font-weight: 400;
}
.box { margin-bottom: 16px; border: 1px solid #30363d; border-radius: 6px; }
.box h3, .box label { font-size: 13px; line-height: 21px; font-weight: 600; }
.box-header {
  padding: 17px 16px 15px;
  border-bottom: 1px solid #30363d;
  border-radius: 5px 5px 0 0;
  background: #161b22;
}
.box-header-tall { padding-bottom: 21px; }
.required { padding-left: 2px; color: #f85149; }
.box-row { padding: 16px; }
.box-row + .box-row { border-top: 1px solid #30363d; }
.field {
  display: block;
  width: 100%;
  height: 32px;
  padding: 5px 12px;
  border: 1px solid #30363d;
  border-radius: 6px;
  background: #0d1117;
}
.box-row.applies { padding: 17px 16px 15px; display: flex; flex-direction: column; align-items: flex-start; gap: 27px; }
code {
  padding: 0 6px;
  border-radius: 6px;
  background: #121d2f;
  color: #7d8590;
  font-family: "DejaVu Sans Mono", monospace;
  font-size: 11px;
  line-height: 18px;
}

.rules { padding: 16px; }
.nested { margin-left: 20px; }
.rule { display: flex; gap: 7px; margin-bottom: 15px; }
.rule-body { flex: 1; min-width: 0; }
.rule label { display: block; }
.rule p { padding-right: 20px; color: #7d8590; font-size: 11px; line-height: 18px; }

input[type="checkbox"] {
  appearance: none;
  flex: none;
  width: 13px;
  height: 13px;
  margin: 3px 0;
  border: 1px solid #858585;
  border-radius: 2px;
  background: #3b3b3b;
}
input[type="checkbox"]:checked { border-color: #99c8ff; background: #99c8ff; }
input[type="checkbox"]:checked::before {
  content: "";
  display: block;
  width: 4px;
  height: 8px;
  margin: 0 0 0 4px;
  border: solid #3b3b3b;
  border-width: 0 2px 2px 0;
  transform: rotate(42deg);
}

.approvals { margin: 3px 0 1px; display: flex; align-items: center; gap: 4px; }
.approvals span { color: #8b949e; }
.caret { border: 4px solid transparent; border-top-color: currentColor; border-bottom: 0; }

.search {
  width: 440px;
  max-width: 100%;
  height: 32px;
  margin: 5px 0 8px;
  padding: 0 9px;
  display: flex;
  align-items: center;
  gap: 6px;
  border: 1px solid #30363d;
  border-radius: 6px;
  background: #010409;
  color: #7d8590;
}
.search input { flex: 1; padding: 0; border: 0; background: none; }
.search input::placeholder { color: #6e7681; opacity: 1; }

.actors { background: #161b22; }
.actor { padding: 16px; display: flex; gap: 12px; }
.actor strong, .actor span { display: block; line-height: 22px; }
.actor strong { font-weight: 600; }
.org-icon { width: 32px; height: 32px; fill: currentColor; color: #e6edf3; }
```
